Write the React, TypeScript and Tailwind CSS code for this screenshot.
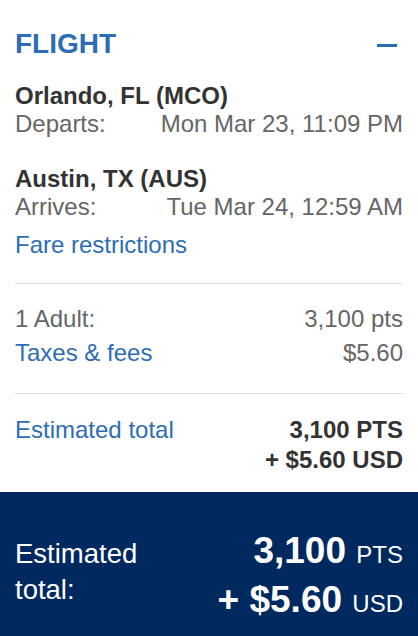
import React from 'react';

const font = { fontFamily: '"Liberation Sans", Arial, Helvetica, sans-serif' };

function Row({ label, value, labelClass = 'text-[#666]', valueClass = 'text-[#666]' }: { label: string, value: string, labelClass?: string, valueClass?: string }) {
    return (
        <div className="flex justify-between items-baseline text-[24px] leading-[28px]">
            <span className={labelClass}>{label}</span>
            <span className={valueClass}>{value}</span>
        </div>
    );
}

export default function App() {
    return (
        <div className="w-[418px] h-[636px] bg-white flex flex-col overflow-hidden" style={font}>
            <div className="flex-1 px-[15px] pt-[28px]">
                {/* header */}
                <div className="flex items-center justify-between">
                    <h1 className="text-[28px] leading-[32px] font-bold text-[#2d6db4]">FLIGHT</h1>
                    <div className="w-[20px] h-[3px] bg-[#2d6db4] mr-[6px] mt-[2px]" />
                </div>

                {/* segments */}
                <div className="mt-[22px]">
                    <div className="text-[24px] leading-[28px] font-bold text-[#333]">Orlando, FL (MCO)</div>
                    <Row label="Departs:" value="Mon Mar 23, 11:09 PM" />
                </div>
                <div className="mt-[27px]">
                    <div className="text-[24px] leading-[28px] font-bold text-[#333]">Austin, TX (AUS)</div>
                    <Row label="Arrives:" value="Tue Mar 24, 12:59 AM" />
                </div>
                <div className="mt-[10px] text-[24px] leading-[28px] text-[#2d6db4]">Fare restrictions</div>

                <div className="h-px bg-[#dcdcdc] mt-[24px]" />

                {/* price breakdown */}
                <div className="pt-[21px] flex flex-col gap-[6px]">
                    <Row label="1 Adult:" value="3,100 pts" />
                    <Row label="Taxes & fees" value="$5.60" labelClass="text-[#2d6db4]" />
                </div>

                <div className="h-px bg-[#dcdcdc] mt-[26px]" />

                <div className="pt-[21px] flex justify-between items-start text-[24px] leading-[30px]">
                    <span className="text-[#2d6db4]">Estimated total</span>
                    <div className="text-right font-bold text-[#333]">
                        <div>3,100 PTS</div>
                        <div>+ $5.60 USD</div>
                    </div>
                </div>
            </div>

            {/* total bar */}
            <div className="h-[144px] shrink-0 bg-[#00295f] text-white px-[15px] pt-[36px] flex justify-between items-baseline">
                <div className="text-[27.5px] leading-[36px]">
                    Estimated<br />total:
                </div>
                <div className="text-right text-[37px] leading-[45px] font-bold">
                    <div>3,100 <span className="text-[24px] font-normal">PTS</span></div>
                    <div>+ $5.60 <span className="text-[24px] font-normal">USD</span></div>
                </div>
            </div>
        </div>
    );
}
